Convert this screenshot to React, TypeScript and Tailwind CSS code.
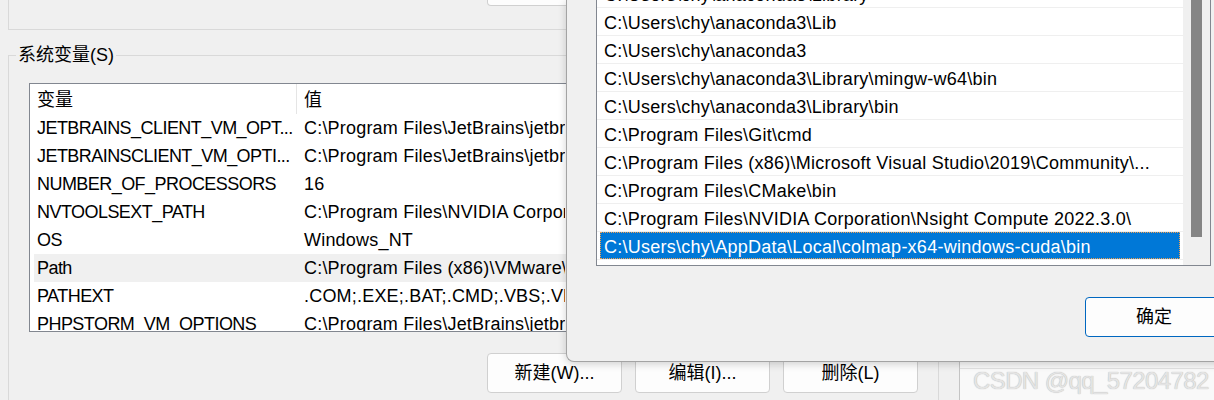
import React from "react";

const backRows: [string, string, boolean][] = [
  ["JETBRAINS_CLIENT_VM_OPT...", "C:\\Program Files\\JetBrains\\jetbrains-client.vmoptions", false],
  ["JETBRAINSCLIENT_VM_OPTI...", "C:\\Program Files\\JetBrains\\jetbrains_client.vmoptions", false],
  ["NUMBER_OF_PROCESSORS", "16", false],
  ["NVTOOLSEXT_PATH", "C:\\Program Files\\NVIDIA Corporation\\NvToolsExt\\", false],
  ["OS", "Windows_NT", false],
  ["Path", "C:\\Program Files (x86)\\VMware\\VMware Workstation\\bin\\", true],
  ["PATHEXT", ".COM;.EXE;.BAT;.CMD;.VBS;.VBE;.JS;.JSE;.WSF;.WSH;.MSC", false],
  ["PHPSTORM_VM_OPTIONS", "C:\\Program Files\\JetBrains\\jetbrains.vmoptions", false],
];

const pathRows: string[] = [
  "C:\\Users\\chy\\anaconda3\\Library",
  "C:\\Users\\chy\\anaconda3\\Lib",
  "C:\\Users\\chy\\anaconda3",
  "C:\\Users\\chy\\anaconda3\\Library\\mingw-w64\\bin",
  "C:\\Users\\chy\\anaconda3\\Library\\bin",
  "C:\\Program Files\\Git\\cmd",
  "C:\\Program Files (x86)\\Microsoft Visual Studio\\2019\\Community\\...",
  "C:\\Program Files\\CMake\\bin",
  "C:\\Program Files\\NVIDIA Corporation\\Nsight Compute 2022.3.0\\",
  "C:\\Users\\chy\\AppData\\Local\\colmap-x64-windows-cuda\\bin",
];

function WinButton({ label }: { label: string }) {
  return (
    <div className="w-[135px] h-[40px] shrink-0 rounded-[4px] border border-[#d0d0d0] bg-[#fdfdfd] flex items-center justify-center leading-none">
      {label}
    </div>
  );
}

export default function App() {
  return (
    <div className="relative w-[1214px] h-[400px] overflow-hidden bg-[#f0f0f0] text-[18px] text-black [font-family:'Liberation_Sans','Noto_Sans_CJK_SC',sans-serif]">
      <div className="flex h-full">
        {/* back dialog */}
        <div className="w-[960px] shrink-0 border-r border-[#c4c4c4]">
          {/* user variables group bottom */}
          <div className="ml-[8px] w-[931px] h-[30px] border-l border-b border-[#d9d9d9]">
            <div className="ml-[478px] w-[135px] h-[6px] bg-[#fdfdfd] border border-t-0 border-[#d0d0d0] rounded-b-[4px]" />
          </div>

          {/* system variables group */}
          <fieldset className="mt-[13px] ml-[8px] w-[931px] h-[400px] border border-b-0 border-[#d9d9d9]">
            <legend className="ml-[7px] px-[2px] leading-[24px]">系统变量(S)</legend>
            <div className="ml-[20px] mt-[16px] w-[890px] h-[249px] border border-[#828790] bg-white overflow-hidden">
              <div className="flex h-[30px]">
                <div className="w-[267px] pl-[7px] pt-[3px] border-r border-[#e5e5e5] flex items-center">变量</div>
                <div className="pl-[7px] pt-[3px] flex items-center">值</div>
              </div>
              {backRows.map(([name, value, sel]) => (
                <div
                  key={name}
                  className={
                    sel
                      ? "flex h-[28px] items-center pt-[1px] ml-[4px] bg-[#f0f0f0] whitespace-nowrap"
                      : "flex h-[28px] items-center pt-[1px] ml-[4px] whitespace-nowrap"
                  }
                >
                  <div className="w-[263px] shrink-0 pl-[3px] overflow-hidden tracking-[-0.55px]">{name}</div>
                  <div className="w-[268px] shrink-0 pl-[7px] overflow-hidden tracking-[0.2px]">{value}</div>
                </div>
              ))}
            </div>
            <div className="flex ml-[478px] mt-[21px] gap-[13px]">
              <WinButton label="新建(W)..." />
              <WinButton label="编辑(I)..." />
              <WinButton label="删除(L)" />
            </div>
          </fieldset>
        </div>

        {/* window behind on the right */}
        <div className="flex-1 bg-[#f9f9f9]">
          <div className="mt-[368px] border-t border-[#e2e2e2]" />
        </div>
      </div>

      {/* front dialog: edit environment variable */}
      <div className="absolute left-[566px] top-0 w-[700px] h-[362px] bg-[#f0f0f0] border-l border-b border-[#a3a3a3] rounded-bl-[8px] shadow-[0_2px_8px_rgba(0,0,0,0.18)]">
        <div className="ml-[29px] w-[615px] h-[266px] flex border-x border-b border-[#828790]">
          <div className="w-[586px] h-full bg-white overflow-hidden">
            <div className="-mt-[20px]">
              {pathRows.map((p, i) => (
                <div key={p} className="h-[28px] border-b border-[#efefef]">
                  <div
                    className={
                      i === pathRows.length - 1
                        ? "mx-[3px] h-[27px] px-[4px] pt-[2px] leading-[27px] overflow-hidden tracking-[0.25px] whitespace-nowrap bg-[#0078d7] text-white outline outline-1 outline-dotted outline-[#f0a050] -outline-offset-1"
                        : "mx-[3px] h-[27px] px-[4px] pt-[2px] leading-[27px] overflow-hidden tracking-[0.25px] whitespace-nowrap"
                    }
                  >
                    {p}
                  </div>
                </div>
              ))}
            </div>
          </div>
          <div className="w-[27px] h-full bg-[#f0f0f0]">
            <div className="ml-[8px] w-[11px] h-[237px] bg-[#858585]" />
          </div>
        </div>
        <div className="ml-[518px] mt-[31px] w-[138px] h-[40px] rounded-[4px] border border-[#0067c0] bg-[#fdfdfd] flex items-center justify-center leading-none">
          确定
        </div>
      </div>

      {/* watermark */}
      <div className="absolute left-[973px] top-[366px] text-[24px] leading-[30px] tracking-[-0.6px] text-[#e4e4e4] [text-shadow:0_0_1px_#a8a8a8] whitespace-nowrap">
        CSDN @qq_57204782
      </div>
    </div>
  );
}
